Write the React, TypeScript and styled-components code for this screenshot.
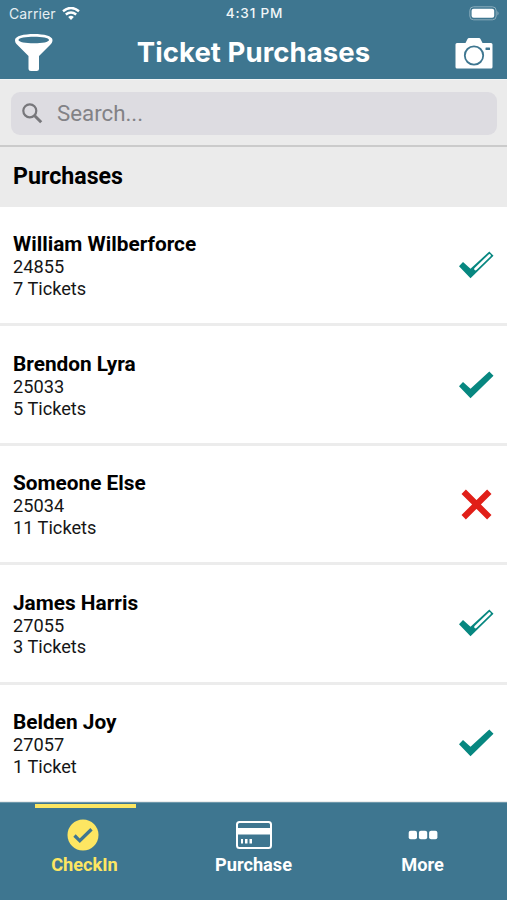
import React from "react";
import styled, { createGlobalStyle } from "styled-components";

const GlobalStyle = createGlobalStyle`
  * { box-sizing: border-box; }
  body { margin: 0; background: #fff; font-family: Roboto, sans-serif; color: #000; }
  svg { display: block; }
`;

const teal = "#3e7690";
const yellow = "#fde662";

const Screen = styled.div`
  width: 507px;
  height: 900px;
  display: flex;
  flex-direction: column;
  overflow: hidden;
`;

const Header = styled.header`
  height: 79px;
  flex: none;
  background: ${teal};
  color: #fff;
`;

const StatusBar = styled.div`
  height: 27px;
  display: grid;
  grid-template-columns: 1fr auto 1fr;
  align-items: center;
  padding: 0 7px 0 9px;
  font: 400 14px/27px Inter, sans-serif;
`;

const Carrier = styled.div`
  display: flex;
  align-items: center;
  gap: 6px;
  letter-spacing: 0.1px;
  color: #e6eef2;
`;

const Clock = styled.div`
  font-size: 13.6px;
  font-weight: 500;
  letter-spacing: 0.8px;
  color: #f1f6f8;
`;

const Battery = styled.div`
  display: flex;
  justify-content: flex-end;
`;

const NavBar = styled.div`
  height: 52px;
  display: grid;
  grid-template-columns: 60px 1fr 60px;
  align-items: center;
`;

const Title = styled.h1`
  margin: 0;
  padding-bottom: 2px;
  text-align: center;
  font: 700 27.5px/48px Inter, sans-serif;
  letter-spacing: 0.08px;
  white-space: nowrap;
`;

const NavIcon = styled.div<{ $end?: boolean }>`
  display: flex;
  justify-content: ${(p) => (p.$end ? "flex-end" : "flex-start")};
  padding: ${(p) => (p.$end ? "2px 14px 0 0" : "0 0 2px 14px")};
`;

const SearchArea = styled.div`
  height: 68px;
  flex: none;
  padding: 12px 10px 0 11px;
  background: #ebebeb;
  border-top: 1px solid #f1f4f5;
  border-bottom: 2px solid #cbcbcb;
`;

const SearchField = styled.div`
  height: 43px;
  border-radius: 9px;
  background: #dddce1;
  display: flex;
  align-items: center;
  gap: 14px;
  padding-left: 11px;
  color: #828286;
  font: 400 22.3px/43px Roboto, sans-serif;
`;

const SectionTitle = styled.h2`
  margin: 0;
  height: 60px;
  flex: none;
  padding-left: 13px;
  background: #ebebeb;
  font: 700 23.2px/59px Roboto, sans-serif;
`;

const List = styled.ul`
  list-style: none;
  margin: 0;
  padding: 0;
  height: 595px;
  flex: none;
  overflow: hidden;
`;

const Row = styled.li`
  height: 119.4px;
  display: flex;
  justify-content: space-between;
  align-items: center;
  padding: 2px 13px 0 13px;
  border-bottom: 3px solid #ececec;
`;

const Name = styled.div`
  font: 700 20.8px/24px Roboto, sans-serif;
`;

const Detail = styled.div`
  font: 400 18.2px/21.8px Roboto, sans-serif;
  color: #161616;
`;

const TabBar = styled.nav`
  flex: 1;
  display: grid;
  grid-template-columns: repeat(3, 1fr);
  background: ${teal};
  border-top: 1px solid #6e98ab;
`;

const Tab = styled.div<{ $active?: boolean }>`
  display: flex;
  flex-direction: column;
  align-items: center;
  color: ${(p) => (p.$active ? yellow : "#fff")};
  font: 700 18.2px/22px Roboto, sans-serif;
`;

const Indicator = styled.div<{ $active?: boolean }>`
  width: 101px;
  height: 4px;
  margin-top: 1px;
  margin-left: 1px;
  background: ${(p) => (p.$active ? yellow : "transparent")};
`;

const TabIcon = styled.div<{ $active?: boolean }>`
  height: 46px;
  display: flex;
  align-items: center;
  padding: 8px ${(p) => (p.$active ? "3px" : "0")} 0 0;
`;

type Status = "partial" | "done" | "none";

const StatusIcon = ({ status }: { status: Status }) => {
  if (status === "none")
    return (
      <svg width="36" height="36" viewBox="0 0 36 36">
        <path d="M5.700 4.800 31.300 30.200M31.300 4.800 5.700 30.200" stroke="#e11f18" strokeWidth="6.200" />
      </svg>
    );
  return (
    <svg width="36" height="36" viewBox="0 0 36 36">
      <path d="M1 18.200 5 13.900 12.500 20.800 31.300 3.500 35.500 7.700 12.500 30.200Z" fill="#078780" />
      {status === "partial" && (
        <path d="m17.500 21 14-13.500" stroke="#fff" strokeWidth="2.600" strokeLinecap="round" />
      )}
    </svg>
  );
};

const FunnelIcon = () => (
  <svg width="40" height="40" viewBox="0 0 40 40">
    <path fill="#fff" fillRule="evenodd" d="M1 8C1 4 10 2 20 2s18.500 2 18.500 6c0 2-.6 3-2 4.500L25 24v12.500q0 2.500-2.500 2.500h-5.500q-2.500 0-2.500-2.500V24L3 12.500C1.600 11 1 10 1 8ZM4.500 8c0 2 7 3.300 15.500 3.300S35 10 35 8s-7-3.200-15-3.200S4.500 6 4.500 8Z" />
  </svg>
);

const CameraIcon = () => (
  <svg width="38" height="32" viewBox="0 0 38 32">
    <path fill="#fff" d="M2 5h8.500l2-4q.5-1 1.500-1h10q1 0 1.500 1l2 4H36q1.500 0 1.500 1.500V29q0 1.500-1.500 1.500H2Q.5 30.500.5 29V6.500Q.5 5 2 5Z" />
    <circle cx="19" cy="17.500" r="9.200" fill="none" stroke={teal} strokeWidth="1.800" />
    <rect x="30.500" y="9.500" width="4.500" height="2.500" rx=".5" fill={teal} />
  </svg>
);

const WifiIcon = () => (
  <svg width="18" height="14" viewBox="0 0 18 14" fill="none" stroke="#fff" strokeWidth="2.400">
    <path d="M1 4.200q8-6.500 16 0M3.800 7.500q5.200-4.200 10.400 0" />
    <path d="m9 13-2.800-3q2.800-2.300 5.600 0Z" fill="#fff" stroke="none" />
  </svg>
);

const BatteryIcon = () => (
  <svg width="31" height="15" viewBox="0 0 31 15">
    <rect x=".8" y=".8" width="26.400" height="13" rx="3.800" fill="none" stroke="#8badbc" />
    <rect x="2.600" y="2.800" width="22.600" height="9" rx="2" fill="#fff" />
    <path d="M28.500 5q2 2.300 0 4.600Z" fill="#9bb8c5" />
  </svg>
);

const SearchIcon = () => (
  <svg width="21" height="21" viewBox="0 0 21 21" fill="none" stroke="#77777b">
    <circle cx="7.800" cy="7.800" r="6.500" strokeWidth="2.200" />
    <path d="m12.700 12.700 6.500 6.500" strokeWidth="3" />
  </svg>
);

const CheckCircle = () => (
  <svg width="32" height="32" viewBox="0 0 32 32">
    <circle cx="16" cy="16" r="15.500" fill={yellow} />
    <path d="m7.500 16.500 5.300 5.300L24.500 10.300" fill="none" stroke={teal} strokeWidth="3.300" />
  </svg>
);

const CardIcon = () => (
  <svg width="36" height="28" viewBox="0 0 36 28">
    <rect x="1" y="1" width="34" height="26" rx="2.500" fill="none" stroke="#fff" strokeWidth="2" />
    <path d="M1 7h34v6.500H1ZM5 18h2v4.500H5ZM9 18h2.500v4.500H9ZM13.500 18h2.500v4.500h-2.500Z" fill="#fff" />
  </svg>
);

const MoreIcon = () => (
  <svg width="30" height="10" viewBox="0 0 30 10" fill="#fff">
    <rect x=".7" y=".8" width="8.300" height="8.400" rx="2" />
    <rect x="10.900" y=".8" width="8.300" height="8.400" rx="2" />
    <rect x="21.100" y=".8" width="8.300" height="8.400" rx="2" />
  </svg>
);

const purchases: { name: string; id: string; tickets: string; status: Status }[] = [
  { name: "William Wilberforce", id: "24855", tickets: "7 Tickets", status: "partial" },
  { name: "Brendon Lyra", id: "25033", tickets: "5 Tickets", status: "done" },
  { name: "Someone Else", id: "25034", tickets: "11 Tickets", status: "none" },
  { name: "James Harris", id: "27055", tickets: "3 Tickets", status: "partial" },
  { name: "Belden Joy", id: "27057", tickets: "1 Ticket", status: "done" },
];

const tabs = [
  { label: "CheckIn", icon: <CheckCircle />, active: true },
  { label: "Purchase", icon: <CardIcon />, active: false },
  { label: "More", icon: <MoreIcon />, active: false },
];

export default function App() {
  return (
    <Screen>
      <GlobalStyle />
      <Header>
        <StatusBar>
          <Carrier>Carrier <WifiIcon /></Carrier>
          <Clock>4:31 PM</Clock>
          <Battery><BatteryIcon /></Battery>
        </StatusBar>
        <NavBar>
          <NavIcon><FunnelIcon /></NavIcon>
          <Title>Ticket Purchases</Title>
          <NavIcon $end><CameraIcon /></NavIcon>
        </NavBar>
      </Header>
      <SearchArea>
        <SearchField><SearchIcon />Search...</SearchField>
      </SearchArea>
      <SectionTitle>Purchases</SectionTitle>
      <List>
        {purchases.map((p) => (
          <Row key={p.id}>
            <div>
              <Name>{p.name}</Name>
              <Detail>{p.id}</Detail>
              <Detail>{p.tickets}</Detail>
            </div>
            <StatusIcon status={p.status} />
          </Row>
        ))}
      </List>
      <TabBar>
        {tabs.map((t) => (
          <Tab key={t.label} $active={t.active}>
            <Indicator $active={t.active} />
            <TabIcon $active={t.active}>{t.icon}</TabIcon>
            {t.label}
          </Tab>
        ))}
      </TabBar>
    </Screen>
  );
}
